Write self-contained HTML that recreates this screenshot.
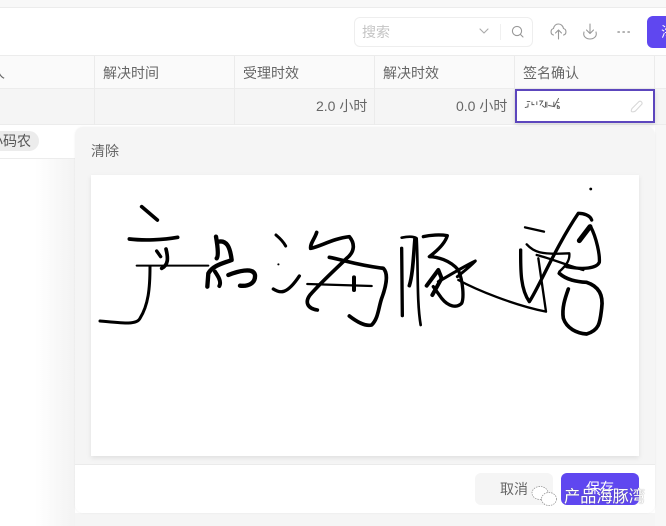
<!DOCTYPE html>
<html lang="zh"><head><meta charset="utf-8">
<style>
*{box-sizing:border-box;margin:0;padding:0}
html,body{width:666px;height:526px;overflow:hidden;background:#fff;font-family:"Liberation Sans","Noto Sans CJK SC",sans-serif;color:#666}
.a{position:absolute}
.t{position:absolute;font-size:14px;line-height:20px;white-space:nowrap}
</style></head><body>
<div class="a" style="left:0;top:0;width:666px;height:8px;background:#f8f8f8;border-bottom:1px solid #ececec"></div>
<div class="a" style="left:354px;top:17px;width:179px;height:30px;border:1px solid #eee;border-radius:6px;background:#fff"></div>
<div class="t" style="left:362px;top:22px;color:#c4c4c4">搜索</div>
<div class="a" style="left:500px;top:24px;width:1px;height:16px;background:#f0f0f0"></div>
<svg class="a" style="left:0;top:0" width="666" height="60" fill="none" stroke="#999" stroke-width="1.1" stroke-linecap="round" stroke-linejoin="round">
<path d="M480 29l4 4 4-4" stroke="#aaa"/>
<circle cx="517" cy="31" r="4.6"/><path d="M520.5 34.5l2.5 2.5"/>
<path d="M553.5 35c-3-.5-3.5-5.5 0-6.5.8-3.5 3-4.5 5-4.5 2.600 0 4.500 2 5 4.500 3.500 1 3 6 0 6.500M558.500 39v-9M555.500 33l3-3 3 3"/>
<path d="M590 24v9M586.500 30l3.500 3.500 3.500-3.500M584 32c-1.500 5 3 7 6 7s7.500-2 6-7"/>
<path d="M618 32h1.300M623 32h1.300M628 32h1.300" stroke-width="1.500"/>
</svg>
<div class="a" style="left:647px;top:16px;width:30px;height:32px;background:#5f47f0;border-radius:6px"></div>
<div class="t" style="left:661px;top:22px;color:#fff">海</div>

<div class="a" style="left:0;top:55px;width:666px;height:34px;background:#fafafa;border-top:1px solid #ececec;border-bottom:1px solid #ececec"></div>
<div class="a" style="left:0;top:89px;width:666px;height:36px;background:#f5f5f5;border-bottom:1px solid #ececec"></div>
<div class="a" style="left:0;top:158px;width:80px;height:1px;background:#ececec"></div>
<div class="a" style="left:94px;top:56px;width:1px;height:69px;background:#ebebeb"></div>
<div class="a" style="left:234px;top:56px;width:1px;height:69px;background:#ebebeb"></div>
<div class="a" style="left:374px;top:56px;width:1px;height:69px;background:#ebebeb"></div>
<div class="a" style="left:514px;top:56px;width:1px;height:69px;background:#ebebeb"></div>
<div class="a" style="left:654px;top:56px;width:1px;height:33px;background:#ebebeb"></div>
<div class="t" style="left:-9px;top:63px">人</div>
<div class="t" style="left:103px;top:63px">解决时间</div>
<div class="t" style="left:243px;top:63px">受理时效</div>
<div class="t" style="left:383px;top:63px">解决时效</div>
<div class="t" style="left:523px;top:63px">签名确认</div>
<div class="t" style="left:316px;top:96px">2.0 小时</div>
<div class="t" style="left:456px;top:96px">0.0 小时</div>
<div class="a" style="left:-12px;top:131px;width:51px;height:20px;border-radius:10px;background:#ececec"></div>
<div class="t" style="left:-11px;top:131px;color:#555">小码农</div>

<div class="a" style="left:515px;top:89px;width:140px;height:34px;background:#fff;border:2px solid #5c46bd;box-shadow:0 2px 5px rgba(0,0,0,.12)"></div>
<svg class="a" style="left:524px;top:97px" width="38" height="12" viewBox="90 175 548 165" preserveAspectRatio="none" fill="none" stroke="#555" stroke-width="13">
<path d="M130 238h50M150 265l-3 45-45 10M205 240v40h35M275 235v50M310 230h50l-40 60M350 290l40 30M400 240v80M420 240v80M440 290l100 20M520 240v70M590 190l-60 110M570 250h30M570 290l30 20v20h-30z"/>
</svg>
<svg class="a" style="left:630px;top:99px" width="15" height="15" fill="none" stroke="#d8d8d8" stroke-width="1.100"><path d="M2 9.500L9 2.500c1.500-1 3.500.5 3 2.500L5.500 12c-1.500 1-3.500 1-4 .5s0-2 .5-3z"/></svg>

<div class="a" style="left:35px;top:159px;width:40px;height:367px;background:linear-gradient(90deg,rgba(240,240,240,0),#f3f3f3)"></div>
<div class="a" style="left:75px;top:513px;width:591px;height:13px;background:#f5f5f5"></div>
<div class="a" style="left:655px;top:125px;width:11px;height:401px;background:#f7f7f7"></div>
<div class="a" style="left:75px;top:127px;width:580px;height:386px;border-radius:8px;background:#f5f5f5;overflow:hidden;box-shadow:0 0 2px rgba(0,0,0,.06)">
  <div class="a" style="left:0;top:337px;width:580px;height:49px;background:#fff;border-top:1px solid #ebebeb"></div>
</div>
<div class="t" style="left:91px;top:141px;color:#666">清除</div>
<div class="a" style="left:91px;top:175px;width:548px;height:281px;background:#fff;box-shadow:0 2px 5px rgba(0,0,0,.09)"></div>

<svg class="a" style="left:0;top:0" width="666" height="526" fill="none" stroke="#000" stroke-linecap="round" stroke-linejoin="round">
<g transform="translate(90 175) scale(.33333)" stroke-width="11">
<path d="M155 95L202 135"/><path d="M118 192C160 197 220 195 263 187"/>
<path d="M200 228L212 245" stroke-width="10"/><path d="M228 222C235 250 235 270 215 280"/>
<path d="M140 272H355" stroke-width="6"/>
<path d="M180 275C180 340 175 390 150 430C140 450 100 445 30 438" stroke-width="9"/>
<path d="M378 185C385 225 385 245 380 250" stroke-width="13"/>
<path d="M385 200C410 195 420 215 425 255C400 265 370 270 355 295L352 335" stroke-width="13"/>
<path d="M375 290C385 305 395 320 388 333" stroke-width="12"/>
<path d="M415 300C440 290 490 275 495 300C497 325 475 335 450 332" stroke-width="13"/>
<path d="M558 180C570 190 580 200 587 213" stroke-width="9"/>
<path d="M565 268h.5" stroke-width="6"/>
<path d="M550 342C570 355 590 360 628 303" stroke-width="10"/>
</g>
<g transform="translate(290 215) scale(.33333)" stroke-width="11">
<path d="M80 52C75 70 60 85 62 100C90 95 130 70 178 65C195 85 195 110 170 130C140 160 100 195 60 240C45 260 50 280 82 285"/>
<path d="M118 127C160 135 200 150 280 160C295 175 290 210 275 250C265 280 265 310 245 330C225 335 200 320 178 303"/>
<path d="M52 207L245 213" stroke-width="7"/><path d="M192 187V225" stroke-width="12"/>
</g>
<g transform="translate(370 175) scale(.33333)" stroke-width="9">
<path d="M95 220L97 422" stroke-width="10"/>
<path d="M95 188C110 185 130 183 140 190C145 280 140 380 152 450" stroke-width="8"/>
<path d="M135 190C130 250 128 300 118 332" stroke-width="11"/>
<path d="M160 185C180 180 210 178 232 182C225 205 205 225 178 245C200 245 240 255 265 285C280 320 282 370 275 385C260 400 235 395 215 370L190 335" stroke-width="10"/>
<path d="M170 332L205 285L215 310L187 360" stroke-width="12"/>
<path d="M205 320C240 300 280 275 316 258C300 275 280 290 262 305"/>
<path d="M265 315C320 345 430 390 528 410L505 250" stroke-width="7"/>
<path d="M465 157L522 170" stroke-width="7"/>
<path d="M470 208C490 230 510 240 598 235C600 255 590 270 568 290" stroke-width="7"/>
<path d="M452 225C452 280 450 340 478 380C505 340 560 210 625 115C640 115 660 120 665 135" stroke-width="10"/>
<path d="M628 197L660 155" stroke-width="15"/>
<path d="M662 155C680 190 690 240 688 262C680 280 640 285 590 275" stroke-width="10"/>
<path d="M500 240C540 250 590 270 640 285" stroke-width="7"/>
<path d="M568 295C590 315 620 320 650 322C690 335 700 365 695 400C690 440 690 465 650 477C620 475 590 460 580 430C575 400 585 370 595 342" stroke-width="11"/>
<path d="M662 42h.5" stroke-width="8"/>
</g>
</svg>

<div class="a" style="left:475px;top:473px;width:78px;height:32px;border-radius:6px;background:#f5f5f5"></div>
<div class="t" style="left:500px;top:479px;color:#666">取消</div>
<div class="a" style="left:561px;top:473px;width:78px;height:32px;border-radius:6px;background:#5f47f0"></div>
<div class="t" style="left:586px;top:478px;color:#fff">保存</div>
<svg class="a" style="left:530px;top:484px" width="30" height="26" fill="#fff" stroke="#888" stroke-width=".7" stroke-dasharray="1.500 1">
<ellipse cx="10" cy="9" rx="8" ry="6.500"/><ellipse cx="19" cy="15" rx="7.500" ry="6.500"/>
</svg>
<div class="t" style="left:564px;top:487px;font-size:16.200px;line-height:20px;color:#fff;text-shadow:0 0 1px #666">产品海豚湾</div>
</body></html>
